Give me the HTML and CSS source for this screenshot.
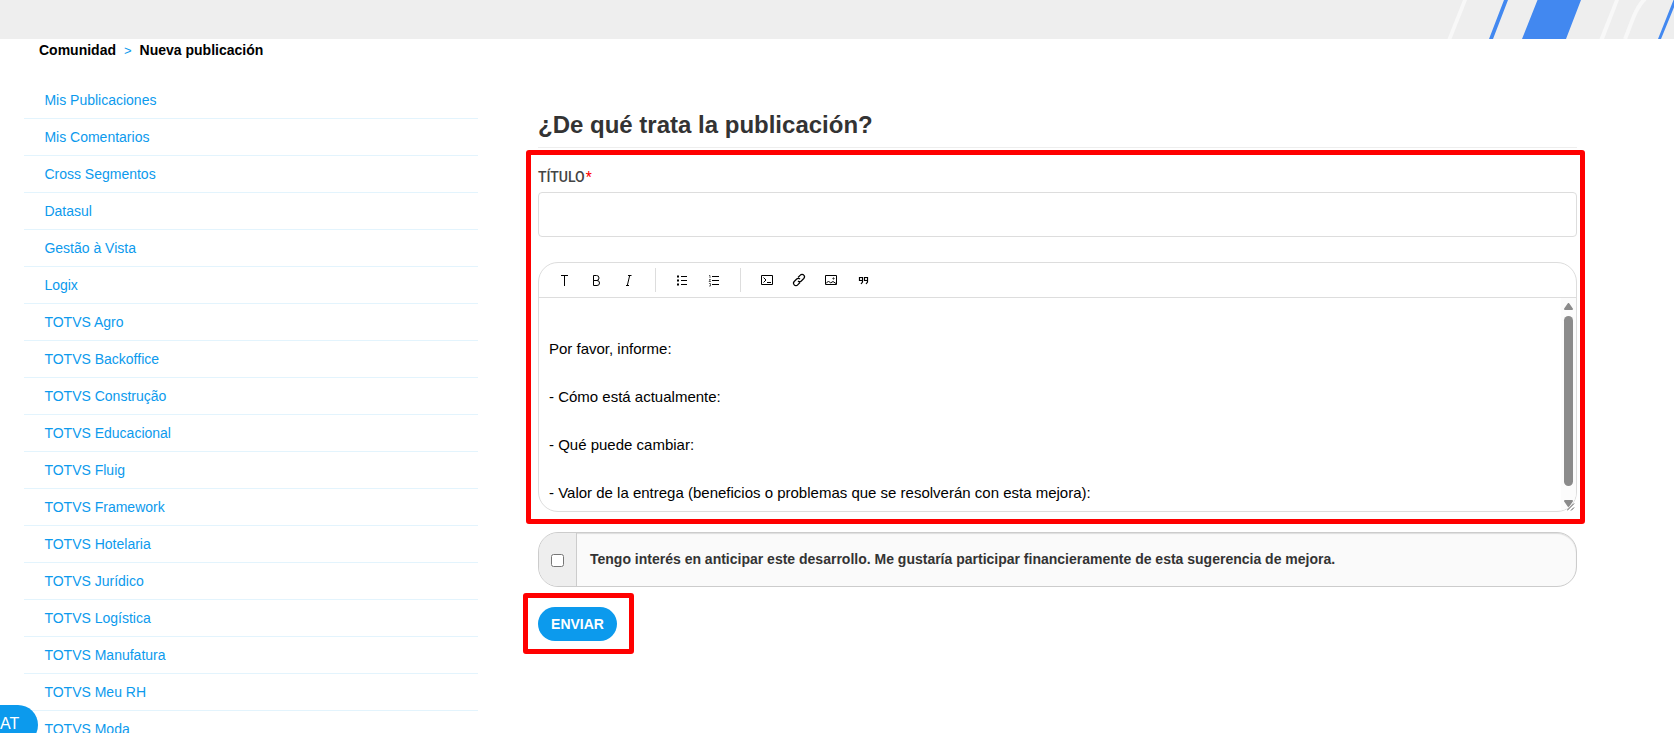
FILE: index.html
```html
<!DOCTYPE html>
<html lang="es">
<head>
    <meta charset="UTF-8">
    <meta name="viewport" content="width=device-width, initial-scale=1.0">
    <title>Nueva publicación</title>
    <link rel="stylesheet" href="styles.css">
</head>
<body>
    <header class="banner">
        <svg width="250" height="39" viewBox="0 0 250 39">
            <path d="M23.500 39 39 0h4L27.500 39zM175.500 39 191 0h4L180 39z" fill="#f8f8f8"/>
            <path d="M201 39C207 25 209 16 214 8Q217 2.500 221 -1" fill="none" stroke="#f8f8f8" stroke-width="4"/>
            <path d="M65 39 80 0h4L69 39zM98 39 113.500 0H157L142 39zM234 39 249.500 0H253L237 39z" fill="#4288f0"/>
        </svg>
    </header>

    <nav class="breadcrumbs">
        <a href="#">Comunidad</a>
        <span class="sep">&gt;</span>
        <a href="#">Nueva publicación</a>
    </nav>

    <div class="container">
        <ul class="sidebar">
            <li><a href="#">Mis Publicaciones</a></li>
            <li><a href="#">Mis Comentarios</a></li>
            <li><a href="#">Cross Segmentos</a></li>
            <li><a href="#">Datasul</a></li>
            <li><a href="#">Gestão à Vista</a></li>
            <li><a href="#">Logix</a></li>
            <li><a href="#">TOTVS Agro</a></li>
            <li><a href="#">TOTVS Backoffice</a></li>
            <li><a href="#">TOTVS Construção</a></li>
            <li><a href="#">TOTVS Educacional</a></li>
            <li><a href="#">TOTVS Fluig</a></li>
            <li><a href="#">TOTVS Framework</a></li>
            <li><a href="#">TOTVS Hotelaria</a></li>
            <li><a href="#">TOTVS Jurídico</a></li>
            <li><a href="#">TOTVS Logística</a></li>
            <li><a href="#">TOTVS Manufatura</a></li>
            <li><a href="#">TOTVS Meu RH</a></li>
            <li><a href="#">TOTVS Moda</a></li>
        </ul>

        <main class="content">
            <h1>¿De qué trata la publicación?</h1>

            <div class="fields">
                <label class="field-label" for="title">TÍTULO<span class="required">*</span></label>
                <input class="title-input" id="title" type="text">

                <div class="editor">
                    <div class="toolbar">
                        <svg class="icon" viewBox="0 0 16 16"><path d="M5 3.500h7M8.500 3.500V14"/></svg>
                        <svg class="icon" viewBox="0 0 16 16"><path d="M5.500 3.500h3a2.500 2.500 0 0 1 0 5h-3zM5.500 8.500H9a2.500 2.500 0 0 1 0 5H5.500z"/></svg>
                        <svg class="icon" viewBox="0 0 16 16"><path d="M8 3.500h3.500M6 13.500h3M9.700 3.500 7.300 13.500"/></svg>
                        <span class="divider first"></span>
                        <svg class="icon" viewBox="0 0 16 16"><path d="M7 4.500h6M7 8.500h6M7 12.500h6"/><path d="M3 4.500h2M3 8.500h2M3 12.500h2" stroke-width="2"/></svg>
                        <svg class="icon" viewBox="0 0 16 16"><path d="M6 4.500h7M6 8.500h7M6 12.500h7"/><path d="M3 3.500h1V6M3 7.500h1.500L3 9.500h2M3 11.500h1.500v2.500H3" stroke-width=".6"/></svg>
                        <span class="divider"></span>
                        <svg class="icon" viewBox="0 0 16 16"><path d="M2.500 3.500h11v9h-11zM4.500 5.500 7 8l-2.500 2.500M8 10.500h4"/></svg>
                        <svg class="icon" viewBox="0 0 16 16"><path d="m7 5.500 2.300-2.300a2.200 2.200 0 0 1 3.500 0 2.400 2.400 0 0 1 0 3.300L10.300 9a2.300 2.300 0 0 1-3.300 0M9 10.500l-2.300 2.300a2.200 2.200 0 0 1-3.500 0 2.400 2.400 0 0 1 0-3.300L5.700 7A2.300 2.300 0 0 1 9 7" stroke-width="1.200"/></svg>
                        <svg class="icon" viewBox="0 0 16 16"><path d="M2.500 3.500h11v9h-11zM3 11.500 5.500 9l2 2L10 9.500l3 2"/><circle cx="10.500" cy="6.500" r=".6"/></svg>
                        <svg class="icon" viewBox="0 0 16 16"><path d="M7.500 8.500h-3v-3h3v4.500L6 12M12.500 8.500h-3v-3h3v4.500L11 12" stroke-width="1.200"/></svg>
                    </div>
                    <div class="editor-body">
                        <div class="editor-text">
                            <p>Por favor, informe:</p>
                            <p>- Cómo está actualmente:</p>
                            <p>- Qué puede cambiar:</p>
                            <p>- Valor de la entrega (beneficios o problemas que se resolverán con esta mejora):</p>
                        </div>
                        <div class="scrollbar">
                            <svg width="9" height="7" viewBox="0 0 9 7"><path d="M4.500 1 8 6H1z"/></svg>
                            <span class="thumb"></span>
                            <svg width="9" height="7" viewBox="0 0 9 7"><path d="M1 1h7L4.500 6z"/></svg>
                        </div>
                    </div>
                    <svg class="resizer" width="8" height="8" viewBox="0 0 8 8"><path d="m0 7.500 7-7M4 7.500l3-3"/></svg>
                </div>
            </div>

            <div class="interest">
                <span class="interest-check"><input type="checkbox" id="interest"></span>
                <label for="interest">Tengo interés en anticipar este desarrollo. Me gustaría participar financieramente de esta sugerencia de mejora.</label>
            </div>

            <div class="submit-box">
                <button class="submit" type="button">ENVIAR</button>
            </div>
        </main>
    </div>

    <div class="chat">AT</div>
</body>
</html>
```

FILE: styles.css
```css
* {
    box-sizing: border-box;
}
body {
    margin: 0;
    height: 733px;
    overflow: hidden;
    background: #fff;
    color: #333;
    font-family: "Liberation Sans", Arial, sans-serif;
    font-size: 14px;
}
a {
    color: #0c9aed;
    text-decoration: none;
}
.banner {
    display: flex;
    justify-content: flex-end;
    height: 39px;
    background: #eee;
}
.breadcrumbs {
    display: flex;
    gap: 8px;
    height: 43px;
    padding: 3px 0 0 39px;
    line-height: 17px;
}
.breadcrumbs a {
    color: #000;
    font-weight: bold;
}
.breadcrumbs .sep {
    color: #0c9aed;
    font-size: 13px;
}
.container {
    display: flex;
    align-items: flex-start;
}
.sidebar {
    width: 454px;
    margin: 0 0 0 24px;
    padding: 0;
    list-style: none;
}
.sidebar li {
    height: 37px;
    padding-left: 20.4px;
    border-bottom: 1px solid #e3f4fd;
    line-height: 36px;
}
.content {
    width: 1062px;
    margin-left: 45px;
}
h1 {
    height: 66px;
    margin: 0 8px 2px 15px;
    padding-top: 29px;
    border-bottom: 1px solid #eee;
    font-size: 24px;
    line-height: 28px;
}

/* highlighted form area */
.fields {
    height: 374px;
    margin-left: 3px;
    padding: 12px 3px 0 7px;
    border: 5px solid #f00;
    border-radius: 3px;
}
.field-label {
    display: block;
    height: 25px;
    font: 500 14px/20px Roboto, sans-serif;
    color: #444;
}
.required {
    margin-left: 1px;
    color: #f00;
    font-weight: 400;
}
.title-input {
    display: block;
    width: 100%;
    height: 45px;
    margin: 0 0 25px;
    border: 1px solid #ddd;
    border-radius: 4px;
}
.editor {
    position: relative;
    height: 250px;
    border: 1px solid #ddd;
    border-radius: 20px;
}
.toolbar {
    display: flex;
    align-items: center;
    gap: 16px;
    height: 35px;
    padding-left: 17px;
    border-bottom: 1px solid #ddd;
}
.icon {
    width: 16px;
    height: 16px;
    fill: none;
    stroke: #000;
    stroke-width: 1;
}
.divider {
    width: 1px;
    height: 24px;
    margin: 0 2px;
    background: #ddd;
}
.divider.first {
    margin-left: 3px;
}
.editor-body {
    display: flex;
    height: 213px;
    border-radius: 0 0 19px 19px;
    overflow: hidden;
}
.editor-text {
    flex: 1;
    padding: 39px 10px 0;
    color: #000;
    font-size: 15px;
    line-height: 24px;
}
.editor-text p {
    margin: 0 0 24px;
}
.scrollbar {
    display: flex;
    flex-direction: column;
    align-items: center;
    width: 15px;
    padding-top: 5px;
    background: #fcfcfc;
}
.scrollbar path {
    fill: #8b8b8b;
    stroke: #8b8b8b;
    stroke-width: 2;
    stroke-linejoin: round;
}
.thumb {
    width: 9px;
    height: 170px;
    margin: 6px 0 14px;
    border-radius: 5px;
    background: #8b8b8b;
}
.resizer {
    position: absolute;
    right: 1px;
    bottom: 0;
    stroke: #555;
}

.interest {
    display: flex;
    height: 55px;
    margin: 8px 8px 6px 15px;
    border: 1px solid #ccc;
    border-radius: 20px;
    background: #fafafa;
    box-shadow: inset 0 1px 1px #ddd;
    overflow: hidden;
}
.interest-check {
    display: flex;
    align-items: center;
    width: 38px;
    padding-left: 12px;
    border-right: 1px solid #ccc;
    background: #eee;
}
.interest-check input {
    width: 13px;
    height: 13px;
    margin: 2px 0 0;
}
.interest label {
    padding-left: 13px;
    font-weight: bold;
    line-height: 53px;
}

.submit-box {
    width: 111px;
    height: 61px;
    padding: 9px 10px;
    border: 5px solid #f00;
    border-radius: 3px;
}
.submit {
    width: 79px;
    height: 34px;
    padding: 0;
    border: 0;
    border-radius: 17px;
    background: #0c9aed;
    color: #fff;
    font: bold 14px "Liberation Sans", Arial, sans-serif;
}

.chat {
    position: fixed;
    left: 0;
    top: 705px;
    width: 38px;
    height: 40px;
    border-radius: 0 20px 20px 0;
    background: #0c9aed;
    color: #fff;
    font-size: 16px;
    line-height: 38px;
}
```
